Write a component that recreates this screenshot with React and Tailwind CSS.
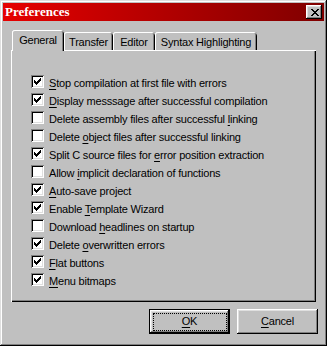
import React from "react";

const CHECK = [
  "......X",
  ".....XX",
  "X...XXX",
  "XX.XXX.",
  "XXXXX..",
  ".XXX...",
  "..X....",
];

const CLOSE = [
  "XX....XX",
  ".XX..XX.",
  "..XXXX..",
  "...XX...",
  "..XXXX..",
  ".XX..XX.",
  "XX....XX",
];

function PixelGlyph({ rows }) {
  const w = rows[0].length;
  const h = rows.length;
  return (
    <svg width={w} height={h} viewBox={`0 0 ${w} ${h}`} shapeRendering="crispEdges">
      {rows.flatMap((row, y) =>
        row.split("").map((c, x) =>
          c === "X" ? <rect key={`${x}-${y}`} x={x} y={y} width="1" height="1" fill="#000" /> : null
        )
      )}
    </svg>
  );
}

const options = [
  { pre: "", key: "S", post: "top compilation at first file with errors", on: true },
  { pre: "", key: "D", post: "isplay messsage after successful compilation", on: true },
  { pre: "Delete assembly files after successful ", key: "l", post: "inking", on: false },
  { pre: "Delete ", key: "o", post: "bject files after successful linking", on: false },
  { pre: "Split C source files for ", key: "e", post: "rror position extraction", on: true },
  { pre: "Allow ", key: "i", post: "mplicit declaration of functions", on: false },
  { pre: "", key: "A", post: "uto-save project", on: true },
  { pre: "Enable ", key: "T", post: "emplate Wizard", on: true },
  { pre: "Download ", key: "h", post: "eadlines on startup", on: false },
  { pre: "Delete ", key: "o", post: "verwritten errors", on: true },
  { pre: "", key: "F", post: "lat buttons", on: true },
  { pre: "", key: "M", post: "enu bitmaps", on: true },
];

const bevel =
  "shadow-[inset_-1px_-1px_#000,inset_1px_1px_#fff,inset_-2px_-2px_#808080,inset_2px_2px_#dfdfdf]";

function Checkbox({ on }) {
  return (
    <div className="w-[13px] h-[13px] bg-white shrink-0 flex items-start justify-start p-[3px] shadow-[inset_1px_1px_#808080,inset_-1px_-1px_#fff,inset_2px_2px_#000,inset_-2px_-2px_#dfdfdf]">
      {on && <PixelGlyph rows={CHECK} />}
    </div>
  );
}

export default function App() {
  return (
    <div
      className="w-[327px] h-[346px] bg-[#c0c0c0] p-[3px] flex flex-col text-black text-[11px] tracking-[-0.2px] shadow-[inset_-1px_-1px_#000,inset_1px_1px_#dfdfdf,inset_-2px_-2px_#808080,inset_2px_2px_#fff]"
      style={{ fontFamily: '"Liberation Sans", Arial, sans-serif' }}
    >
      {/* Title bar */}
      <div className="h-[18px] bg-linear-to-r from-[#e60000] to-[#800000] flex items-center justify-between pl-[2px] pr-[2px]">
        <span
          className="text-white font-bold text-[13px] leading-[18px] tracking-normal"
          style={{ fontFamily: '"Liberation Serif", "Times New Roman", serif' }}
        >
          Preferences
        </span>
        <div className={`w-[16px] h-[14px] bg-[#c0c0c0] flex items-center justify-center pl-[1px] ${bevel}`}>
          <PixelGlyph rows={CLOSE} />
        </div>
      </div>

      {/* Tabs */}
      <div className="mt-[9px] mx-[8px] flex flex-col">
        <div className="h-[20px] flex items-end pl-[1px] relative z-10">
          <div className="w-[52px] h-[21px] -mb-[1px] bg-[#c0c0c0] rounded-t-[3px] text-center pt-[2px] leading-[16px] shadow-[inset_1px_0_#fff,inset_0_1px_#fff,inset_-1px_0_#000,inset_-2px_0_#808080]">
            General
          </div>
          {[
            ["Transfer", "w-[49px]"],
            ["Editor", "w-[42px]"],
            ["Syntax Highlighting", "w-[102px]"],
          ].map(([label, w]) => (
            <div
              key={label}
              className={`${w} h-[18px] bg-[#c0c0c0] rounded-t-[3px] text-center pt-[2px] leading-[16px] shadow-[inset_1px_0_#fff,inset_0_1px_#fff,inset_-1px_0_#000,inset_-2px_0_#808080]`}
            >
              {label}
            </div>
          ))}
        </div>

        {/* Panel */}
        <div className="h-[252px] pt-[23px] pl-[20px] flex flex-col shadow-[inset_1px_1px_#fff,inset_-1px_-1px_#000,inset_-2px_-2px_#808080]">
          {options.map((o, i) => (
            <div key={i} className="h-[18px] flex items-start gap-[5px]">
              <div className="mt-[2px]">
                <Checkbox on={o.on} />
              </div>
              <span className="leading-[20px] whitespace-nowrap">
                {o.pre}
                <u className="underline-offset-2">{o.key}</u>
                {o.post}
              </span>
            </div>
          ))}
        </div>
      </div>

      {/* Buttons */}
      <div className="mt-[7px] flex justify-end gap-[7px] pr-[6px]">
        <div className="w-[81px] h-[25px] bg-[#c0c0c0] border border-black relative flex items-center justify-center shadow-[inset_-1px_-1px_#000,inset_1px_1px_#fff,inset_-2px_-2px_#808080,inset_2px_2px_#dfdfdf]">
          <div className="absolute left-[3px] top-[3px] right-[2px] bottom-[2px] border border-dotted border-black" />
          <span>
            <u className="underline-offset-2">O</u>K
          </span>
        </div>
        <div className={`w-[81px] h-[25px] bg-[#c0c0c0] flex items-center justify-center ${bevel}`}>
          <span>
            <u className="underline-offset-2">C</u>ancel
          </span>
        </div>
      </div>
    </div>
  );
}
